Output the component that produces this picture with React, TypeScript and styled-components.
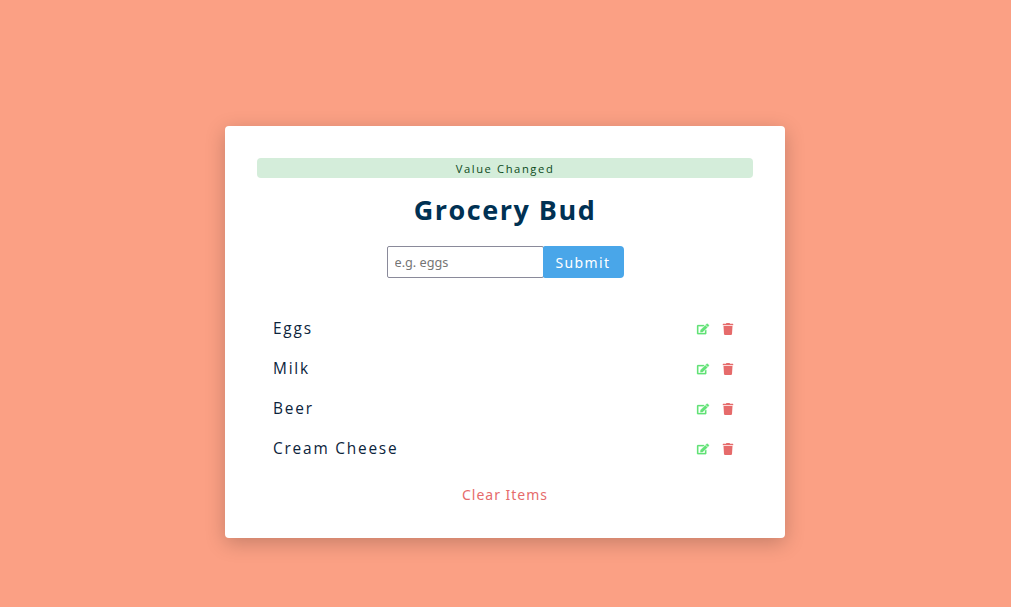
import React from 'react';
import styled, { createGlobalStyle } from 'styled-components';
import { FaEdit, FaTrash } from 'react-icons/fa';

const GlobalStyle = createGlobalStyle`
  *, *::before, *::after { margin: 0; padding: 0; box-sizing: border-box; }
  body {
    font-family: "Open Sans", "Noto Sans", sans-serif;
    background: #fba084;
    color: #0c243c;
    line-height: 1.5;
    font-size: 14px;
  }
`;

const Page = styled.main`
  min-height: 100vh;
  padding: 126px 0 0 225px;
`;

const Card = styled.section`
  width: 560px;
  height: 412px;
  padding: 32px;
  background: #fff;
  border-radius: 4px;
  box-shadow: 0 5px 20px rgba(0, 0, 0, 0.21);
`;

const Alert = styled.p`
  height: 20px;
  line-height: 22px;
  margin-bottom: 16px;
  border-radius: 4px;
  background: #d4edda;
  color: #0c4a1b;
  font-size: 11.2px;
  letter-spacing: 1.6px;
  text-align: center;
`;

const Title = styled.h3`
  height: 32px;
  line-height: 32px;
  margin-bottom: 20px;
  color: #003153;
  font-size: 27px;
  letter-spacing: 1.5px;
  text-align: center;
`;

const FormRow = styled.div`
  display: flex;
  justify-content: center;
  height: 32px;
`;

const Field = styled.input`
  width: 157px;
  margin-right: -1px;
  padding: 0 7px;
  border: 1px solid #8a8a9a;
  border-radius: 2px;
  font: 12.7px "Noto Sans", sans-serif;
  &::placeholder { color: #757575; }
`;

const Submit = styled.button`
  width: 81px;
  border: 0;
  border-radius: 2px 4px 4px 2px;
  background: #49a6e9;
  color: #fff;
  font: 14px "Noto Sans", sans-serif;
  letter-spacing: 1.4px;
`;

const List = styled.div`
  margin-top: 34px;
`;

const Item = styled.article`
  display: flex;
  align-items: center;
  justify-content: space-between;
  height: 32px;
  margin-bottom: 8px;
  padding: 0 14px 0 16px;
`;

const ItemName = styled.p`
  padding-top: 1px;
  font-size: 15.4px;
  letter-spacing: 1.8px;
`;

const Actions = styled.div`
  display: flex;
  gap: 12.5px;
  margin: 2px 5.5px 0 0;
`;

const IconButton = styled.button<{ $tone: string }>`
  display: flex;
  border: 0;
  background: transparent;
  color: ${({ $tone }) => $tone};
  font-size: 12px;
`;

const EditIcon = styled(FaEdit)`
  stroke: currentColor;
  stroke-width: 12px;
  overflow: visible;
`;

const Clear = styled.button`
  display: block;
  margin: 21px auto 0;
  border: 0;
  background: transparent;
  color: #e66b6b;
  font: 14px "Noto Sans", sans-serif;
  letter-spacing: 1px;
`;

const items = ['Eggs', 'Milk', 'Beer', 'Cream Cheese'];

export default function App() {
  return (
    <Page>
      <GlobalStyle />
      <Card>
        <Alert>Value Changed</Alert>
        <Title>Grocery Bud</Title>
        <FormRow>
          <Field placeholder="e.g. eggs" />
          <Submit>Submit</Submit>
        </FormRow>
        <List>
          {items.map((name) => (
            <Item key={name}>
              <ItemName>{name}</ItemName>
              <Actions>
                <IconButton $tone="#62e277" aria-label="Edit"><EditIcon /></IconButton>
                <IconButton $tone="#e66b6b" aria-label="Delete"><FaTrash /></IconButton>
              </Actions>
            </Item>
          ))}
        </List>
        <Clear>Clear Items</Clear>
      </Card>
    </Page>
  );
}
